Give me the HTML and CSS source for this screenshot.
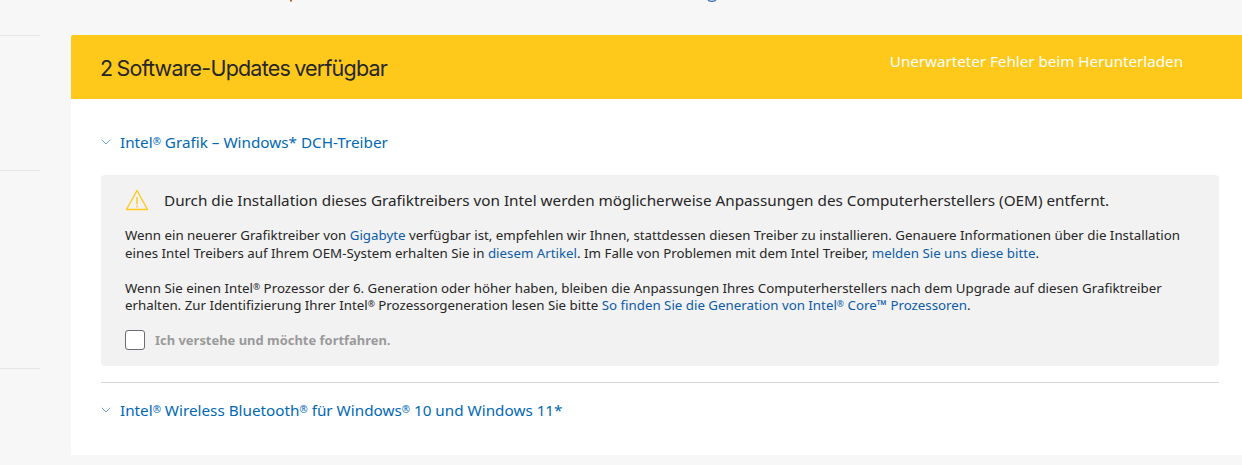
FILE: index.html
```html
<!DOCTYPE html>
<html lang="de">
<head>
<meta charset="utf-8">
<title>Software-Updates</title>
<link rel="stylesheet" href="styles.css">
</head>
<body>
<svg class="clip clip-a" viewBox="0 0 2 2" width="2" height="2"><rect width="2" height="1.500" fill="#b8622a"/></svg>
<svg class="clip clip-b" viewBox="0 0 10 3" width="10" height="3"><path d="M1 0c.8 1.700 6.700 1.700 8 0" fill="none" stroke="#2a64b0" stroke-width="1.200"/></svg>
<div class="page">
  <aside class="side">
    <div class="rule r1"></div>
    <div class="rule r2"></div>
    <div class="rule r3"></div>
  </aside>
  <main class="panel">
    <header class="banner">
      <h1 class="title">2 Software-Updates verfügbar</h1>
      <p class="error">Unerwarteter Fehler beim Herunterladen</p>
    </header>
    <div class="content">
      <div class="acc">
        <svg class="chev" viewBox="0 0 10 6" width="10" height="6"><path d="M.8.8 5 5 9.200.8" fill="none" stroke="#0068b5" stroke-width=".6"/></svg>
        <a class="acc-title">Intel<span class="reg">®</span> Grafik – Windows* DCH-Treiber</a>
      </div>
      <section class="notice">
        <div class="notice-head">
          <svg class="warn" viewBox="0 0 24 22" width="24" height="22"><path d="M12 1.500 1.500 20.500h21Z" fill="none" stroke="#fec91b" stroke-width="1.400" stroke-linejoin="round"/><path d="M12 8v7.500M12 16.800v1.700" stroke="#fec91b" stroke-width="1.400"/></svg>
          <p class="notice-title">Durch die Installation dieses Grafiktreibers von Intel werden möglicherweise Anpassungen des Computerherstellers (OEM) entfernt.</p>
        </div>
        <p class="para">Wenn ein neuerer Grafiktreiber von <a>Gigabyte</a> verfügbar ist, empfehlen wir Ihnen, stattdessen diesen Treiber zu installieren. Genauere Informationen über die Installation<br>eines Intel Treibers auf Ihrem OEM-System erhalten Sie in <a>diesem Artikel</a>. Im Falle von Problemen mit dem Intel Treiber, <a>melden Sie uns diese bitte</a>.</p>
        <p class="para">Wenn Sie einen Intel<span class="reg">®</span> Prozessor der 6. Generation oder höher haben, bleiben die Anpassungen Ihres Computerherstellers nach dem Upgrade auf diesen Grafiktreiber<br>erhalten. Zur Identifizierung Ihrer Intel<span class="reg">®</span> Prozessorgeneration lesen Sie bitte <a>So finden Sie die Generation von Intel<span class="reg">®</span> Core™ Prozessoren</a>.</p>
        <label class="check"><span class="box"></span><span class="check-text">Ich verstehe und möchte fortfahren.</span></label>
      </section>
      <hr class="sep">
      <div class="acc acc2">
        <svg class="chev" viewBox="0 0 10 6" width="10" height="6"><path d="M.8.8 5 5 9.200.8" fill="none" stroke="#0068b5" stroke-width=".6"/></svg>
        <a class="acc-title">Intel<span class="reg">®</span> Wireless Bluetooth<span class="reg">®</span> für Windows<span class="reg">®</span> 10 und Windows 11*</a>
      </div>
    </div>
  </main>
</div>
</body>
</html>
```
FILE: styles.css
```css
* { box-sizing: border-box; }
html, body { margin: 0; height: 100%; overflow: hidden; }
body { background: #f7f7f7; font-family: "Noto Sans", "Open Sans", sans-serif; color: #262626; position: relative; }
.clip { position: absolute; top: 0; display: block; }
.clip-a { left: 290px; }
.clip-b { left: 707px; }
.page { display: flex; padding-top: 35px; height: 465px; }
.side { width: 40px; margin-right: 31px; flex: none; }
.rule { height: 1px; background: #e6e6e6; }
.r2 { margin-top: 134px; }
.r3 { margin-top: 197px; }
.panel { width: 1171px; height: 420px; background: #fff; flex: none; }
.banner { height: 64px; background: #fec91b; display: flex; justify-content: space-between; padding: 0 59px 0 29px; border-top-left-radius: 2px; }
.title { margin: 19px 0 0; font: 400 21.500px/28px Inter, sans-serif; letter-spacing: -.8px; word-spacing: -1px; color: #262626; }
.error { margin: 16px 0 0; font-size: 15.170px; line-height: 20px; color: #fff; }
.content { padding: 0 23px 0 30px; }
.acc { display: flex; align-items: center; gap: 9px; height: 88px; padding-bottom: 2px; }
.acc2 { height: 53px; padding-bottom: 0; }
.acc-title { font-size: 15.250px; line-height: 20px; color: #0068b5; }
.reg { font-size: .65em; vertical-align: .3em; line-height: 0; }
.chev { flex: none; }
.notice { background: #f2f2f2; border-radius: 4px; height: 191px; padding: 13px 24px 0; margin-top: -12px; }
.notice-head { display: flex; align-items: center; gap: 15px; height: 24px; }
.warn { flex: none; }
.notice-title { margin: 0; font-size: 15.270px; line-height: 20px; white-space: nowrap; }
.para { margin: 15px 0 0; font-size: 13.300px; line-height: 17.500px; white-space: nowrap; }
.para + .para { margin-top: 17.500px; }
.para a { color: #0d5ca8; }
.check { display: flex; align-items: center; gap: 10px; margin-top: 15px; }
.box { width: 20px; height: 20px; border: 1px solid #6a6d75; border-radius: 3px; background: #fff; }
.check-text { font-size: 12.940px; font-weight: 700; color: #9a9a9a; }
.sep { margin: 16px 0 0; border: 0; height: 1px; background: #d7d7d7; }
```
